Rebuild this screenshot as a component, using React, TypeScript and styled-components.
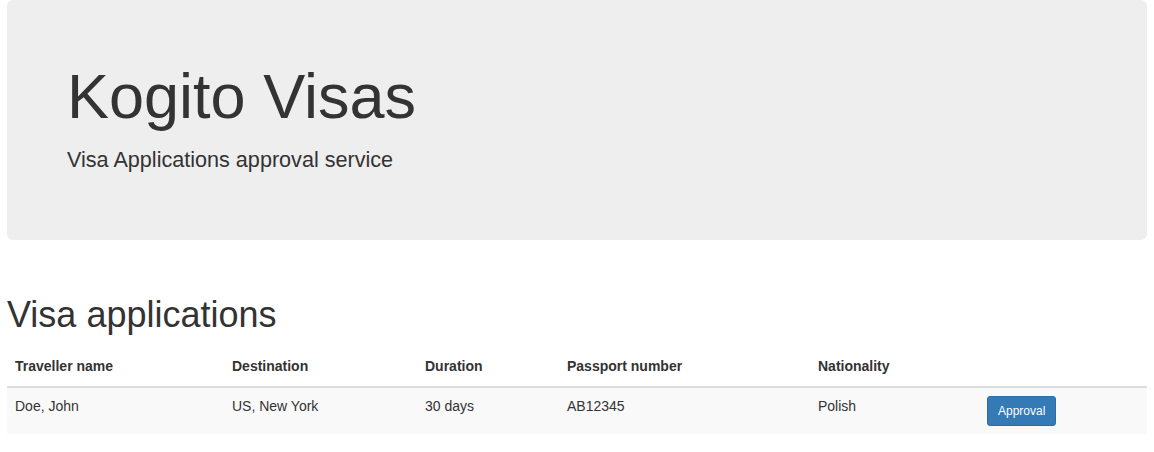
import React from "react";
import styled, { createGlobalStyle } from "styled-components";

const Global = createGlobalStyle`
  html, body { margin: 0; padding: 0; background: #fff; }
  body {
    font-family: "Liberation Sans", Arial, Helvetica, sans-serif;
    font-size: 14px;
    line-height: 1.42857143;
    color: #333;
  }
  * { box-sizing: border-box; }
`;

const Container = styled.div`
  width: 1140px;
  margin: 0 auto;
`;

const Jumbotron = styled.div`
  background: #eee;
  border-radius: 6px;
  padding: 62px 60px 48px;
  height: 240px;
  margin-bottom: 30px;
`;

const Title = styled.h1`
  margin: 0 0 10px;
  font-size: 63px;
  font-weight: 500;
  line-height: 1.1;
  color: #333;
`;

const Lead = styled.p`
  margin: 0;
  font-size: 21.6px;
  line-height: 30px;
  font-weight: 400;
  padding-top: 4px;
`;

const Section = styled.section`
  padding-top: 25px;
`;

const Heading = styled.h2`
  margin: 0 0 13px;
  font-size: 36px;
  font-weight: 500;
  line-height: 1.1;
`;

const Table = styled.table`
  width: 100%;
  border-collapse: collapse;
  border-spacing: 0;
  table-layout: fixed;
`;

const Th = styled.th<{ $w: number }>`
  width: ${(p) => p.$w}px;
  text-align: left;
  font-weight: bold;
  padding: 8px 8px 10px;
  line-height: 20px;
  vertical-align: bottom;
  border-bottom: 2px solid #ddd;
`;

const Row = styled.tr`
  background: #f9f9f9;
`;

const Td = styled.td`
  padding: 8px;
  line-height: 20px;
  vertical-align: top;
`;

const Button = styled.button`
  display: inline-block;
  font-family: inherit;
  font-size: 12px;
  line-height: 1.5;
  padding: 5px 10px;
  border-radius: 3px;
  color: #fff;
  background: #337ab7;
  border: 1px solid #2e6da4;
  cursor: pointer;
`;

const columns = [
  { label: "Traveller name", w: 217 },
  { label: "Destination", w: 193 },
  { label: "Duration", w: 142 },
  { label: "Passport number", w: 251 },
  { label: "Nationality", w: 169 },
  { label: "", w: 168 },
];

const rows = [
  {
    name: "Doe, John",
    destination: "US, New York",
    duration: "30 days",
    passport: "AB12345",
    nationality: "Polish",
  },
];

export default function App() {
  return (
    <>
      <Global />
      <Container>
        <Jumbotron>
          <Title>Kogito Visas</Title>
          <Lead>Visa Applications approval service</Lead>
        </Jumbotron>
        <Section>
          <Heading>Visa applications</Heading>
          <Table>
            <thead>
              <tr>
                {columns.map((c, i) => (
                  <Th key={i} $w={c.w}>
                    {c.label}
                  </Th>
                ))}
              </tr>
            </thead>
            <tbody>
              {rows.map((r, i) => (
                <Row key={i}>
                  <Td>{r.name}</Td>
                  <Td>{r.destination}</Td>
                  <Td>{r.duration}</Td>
                  <Td>{r.passport}</Td>
                  <Td>{r.nationality}</Td>
                  <Td>
                    <Button type="button">Approval</Button>
                  </Td>
                </Row>
              ))}
            </tbody>
          </Table>
        </Section>
      </Container>
    </>
  );
}
